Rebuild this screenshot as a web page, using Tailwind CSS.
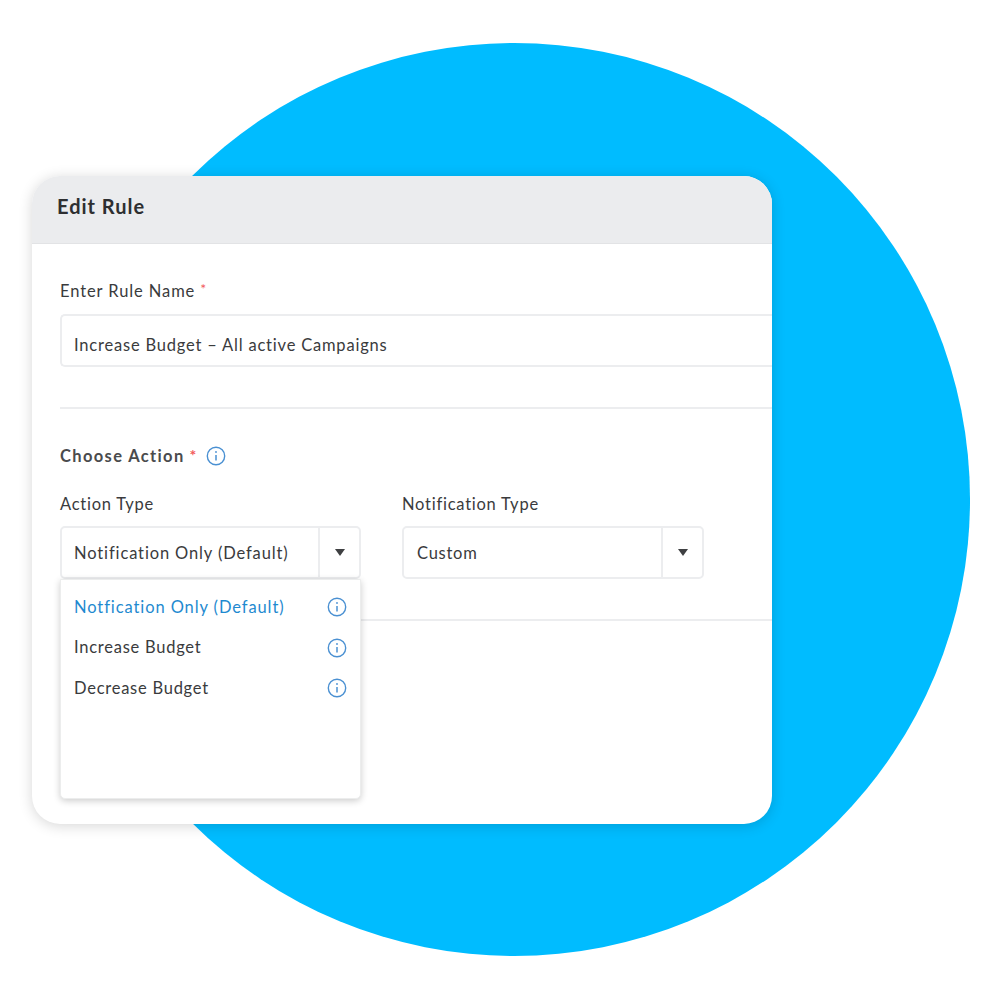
<!DOCTYPE html>
<html lang="en">
<head>
    <meta charset="UTF-8">
    <title>Edit Rule</title>
    <script src="https://cdn.jsdelivr.net/npm/@tailwindcss/browser@4"></script>
</head>
<body class="relative w-[1000px] h-[1000px] overflow-hidden bg-white font-['Lato','Noto_Sans',sans-serif] text-[#3a3b3d]">
    <!-- backdrop circle -->
    <div class="absolute left-[58px] top-[43px] w-[912px] h-[913px] rounded-full bg-[#00bcff]"></div>

    <div class="relative ml-[32px] mt-[176px] w-[740px] h-[648px] rounded-[28px] bg-white shadow-[0_2px_14px_rgba(0,0,0,0.16)]">
        <div class="h-[68px] pl-[25px] flex items-center rounded-t-[28px] bg-[#ebecee] border-b border-[#e2e3e5]">
            <h1 class="text-[20px] font-bold tracking-[1px] text-[#2e2f31] -mt-[8px]">Edit Rule</h1>
        </div>

        <div class="pl-[28px] overflow-hidden">
            <div class="h-[70px] pt-[37px] flex text-[16.5px] leading-[20px] tracking-[0.9px]">
                Enter Rule Name <span class="ml-[5px] text-[14px] leading-[16px] text-[#f25a5a]">*</span>
            </div>
            <div class="h-[53px] pl-[12px] pt-[9px] flex items-center rounded-l-[5px] border-2 border-r-0 border-[#ecedef] text-[16.5px] tracking-[0.8px]">
                Increase Budget – All active Campaigns
            </div>
            <div class="mt-[40px] h-[2px] bg-[#ecedef]"></div>

            <div class="mt-[37px] h-[20px] flex items-center text-[16.5px] font-bold tracking-[1.35px] text-[#4a4b4d]">
                Choose Action
                <span class="ml-[5px] -mt-[3px] text-[16px] text-[#f25a5a]">*</span>
                <svg class="ml-[8px]" width="20" height="20" viewBox="0 0 20 20" fill="none" stroke="#4a90d2" stroke-width="1.4"><circle cx="10" cy="10" r="8.7"/><path d="M10 9v5.5" stroke-width="1.5"/><circle cx="10" cy="6" r="0.9" fill="#4a90d2" stroke="none"/></svg>
            </div>

            <div class="mt-[28px] flex gap-[41px] text-[16.5px] tracking-[0.75px]">
                <div class="w-[301px]">
                    <div class="h-[20px] leading-[20px]">Action Type</div>
                    <div class="mt-[12px] h-[53px] flex rounded-[5px] border-2 border-[#ecedef]">
                        <div class="flex-1 pl-[12px] pt-[2px] flex items-center tracking-[0.87px]">Notification Only (Default)</div>
                        <div class="w-[41px] flex items-center justify-center border-l-2 border-[#ecedef]">
                            <svg width="10" height="7" viewBox="0 0 10 7"><path d="M0 0h10L5 7z" fill="#3f4042"/></svg>
                        </div>
                    </div>
                </div>
                <div class="w-[302px]">
                    <div class="h-[20px] leading-[20px]">Notification Type</div>
                    <div class="mt-[12px] h-[53px] flex rounded-[5px] border-2 border-[#ecedef]">
                        <div class="flex-1 pl-[13px] pt-[2px] flex items-center">Custom</div>
                        <div class="w-[41px] flex items-center justify-center border-l-2 border-[#ecedef]">
                            <svg width="10" height="7" viewBox="0 0 10 7"><path d="M0 0h10L5 7z" fill="#3f4042"/></svg>
                        </div>
                    </div>
                </div>
            </div>
            <div class="mt-[40px] h-[2px] bg-[#ecedef]"></div>
        </div>

        <!-- open dropdown -->
        <div class="absolute left-[28px] top-[403px] w-[301px] h-[220px] pt-[7px] pl-[13px] pr-[13px] rounded-b-[5px] bg-white border border-[#eceded] shadow-[0_2px_7px_rgba(0,0,0,0.2)] text-[16.5px] tracking-[0.75px]">
            <div class="h-[40.5px] flex items-center justify-between text-[#1f8ad0]">
                <span class="tracking-[0.9px]">Notfication Only (Default)</span>
                <svg width="20" height="20" viewBox="0 0 20 20" fill="none" stroke="#4a90d2" stroke-width="1.4"><circle cx="10" cy="10" r="8.7"/><path d="M10 9v5.5" stroke-width="1.5"/><circle cx="10" cy="6" r="0.9" fill="#4a90d2" stroke="none"/></svg>
            </div>
            <div class="h-[40.5px] flex items-center justify-between">
                <span>Increase Budget</span>
                <svg width="20" height="20" viewBox="0 0 20 20" fill="none" stroke="#4a90d2" stroke-width="1.4"><circle cx="10" cy="10" r="8.7"/><path d="M10 9v5.5" stroke-width="1.5"/><circle cx="10" cy="6" r="0.9" fill="#4a90d2" stroke="none"/></svg>
            </div>
            <div class="h-[40.5px] flex items-center justify-between">
                <span>Decrease Budget</span>
                <svg width="20" height="20" viewBox="0 0 20 20" fill="none" stroke="#4a90d2" stroke-width="1.4"><circle cx="10" cy="10" r="8.7"/><path d="M10 9v5.5" stroke-width="1.5"/><circle cx="10" cy="6" r="0.9" fill="#4a90d2" stroke="none"/></svg>
            </div>
        </div>
    </div>
</body>
</html>
